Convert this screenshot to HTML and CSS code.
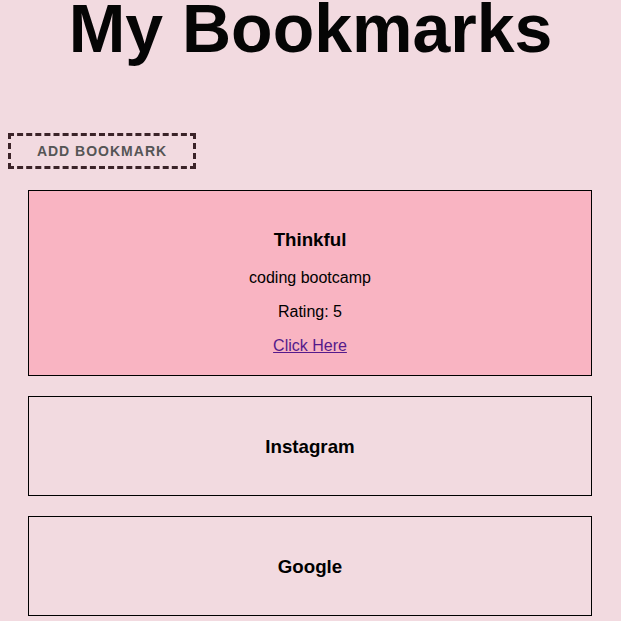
FILE: index.html
```html
<!DOCTYPE html>
<html lang="en">
<head>
<meta charset="utf-8">
<title>My Bookmarks</title>
<link rel="stylesheet" href="styles.css">
</head>
<body>
  <main class="page">
    <h1 class="title">My Bookmarks</h1>
    <button class="add-btn" type="button">ADD BOOKMARK</button>
    <ul class="list">
      <li class="card card-expanded">
        <h3 class="card-title">Thinkful</h3>
        <p class="card-text">coding bootcamp</p>
        <p class="card-text">Rating: 5</p>
        <p class="card-text"><a class="card-link" href="#">Click Here</a></p>
      </li>
      <li class="card card-collapsed">
        <h3 class="card-title">Instagram</h3>
      </li>
      <li class="card card-collapsed">
        <h3 class="card-title">Google</h3>
      </li>
    </ul>
  </main>
</body>
</html>
```

FILE: styles.css
```css
html, body {
  margin: 0;
  padding: 0;
  background: #f2dae0;
}

body {
  font-family: "Liberation Sans", Arial, sans-serif;
  color: #000;
}

.page {
  padding: 0 8px;
}

.title {
  margin: 0 0 76px;
  font-size: 68px;
  line-height: 57px;
  font-weight: bold;
  text-align: center;
  color: #050505;
}

.add-btn {
  display: block;
  box-sizing: border-box;
  width: 188px;
  height: 36px;
  margin: 0;
  padding: 0;
  background: transparent;
  border: 3px dashed #3b2328;
  font-family: "Liberation Sans", Arial, sans-serif;
  font-size: 14px;
  font-weight: bold;
  letter-spacing: 1px;
  color: #555;
  text-align: center;
}

.list {
  list-style: none;
  margin: 21px 0 0;
  padding: 0;
}

.card {
  margin: 0 21px 20px 20px;
  padding: 20px;
  border: 1px solid #000;
  text-align: center;
}

.card-expanded {
  background: #f9b4c2;
}

.card-title {
  margin: 18px 0;
  font-size: 18.72px;
  line-height: 22px;
  font-weight: bold;
}

.card-collapsed .card-title {
  margin: 19px 0 17px;
}

.card-text {
  margin: 16px 0;
  font-size: 16px;
  line-height: 18px;
}

.card-text:last-child {
  margin-bottom: 0;
}

.card-link {
  color: #551a8b;
  text-decoration: underline;
}
```
